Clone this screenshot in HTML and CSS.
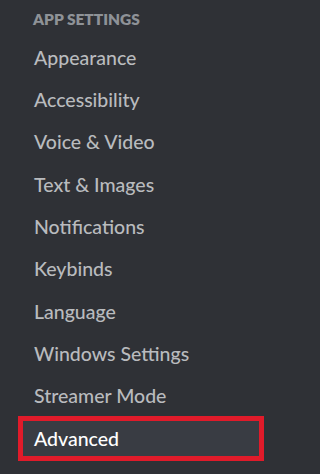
FILE: index.html
```html
<!DOCTYPE html>
<html>
<head>
<meta charset="utf-8">
<link rel="stylesheet" href="styles.css">
</head>
<body>
<nav class="side">
  <div class="header">App Settings</div>
  <div class="item">Appearance</div>
  <div class="item">Accessibility</div>
  <div class="item">Voice &amp; Video</div>
  <div class="item">Text &amp; Images</div>
  <div class="item">Notifications</div>
  <div class="item">Keybinds</div>
  <div class="item">Language</div>
  <div class="item">Windows Settings</div>
  <div class="item">Streamer Mode</div>
  <div class="item selected">Advanced</div>
</nav>
</body>
</html>
```

FILE: styles.css
```css
html, body {
  margin: 0;
  padding: 0;
  background: #2f3136;
}
.side {
  width: 275px;
  height: 474px;
  background: #2f3136;
  font-family: Lato, "Noto Sans", sans-serif;
  overflow: hidden;
}
.header {
  height: 36px;
  box-sizing: border-box;
  padding: 10px 0 0 33px;
  font-size: 15.5px;
  line-height: 18px;
  font-weight: 800;
  text-transform: uppercase;
  color: #8e9297;
}
.item {
  height: 42.33px;
  display: flex;
  align-items: center;
  padding-left: 34px;
  font-size: 19.5px;
  font-weight: 500;
  color: #b9bbbe;
}
.item.selected {
  box-sizing: border-box;
  height: 45px;
  width: 246px;
  margin: -1.33px 0 0 18px;
  padding-left: 11px;
  border: 5px solid #e01b2a;
  background: #393c43;
  color: #ffffff;
  font-weight: 500;
}
```
